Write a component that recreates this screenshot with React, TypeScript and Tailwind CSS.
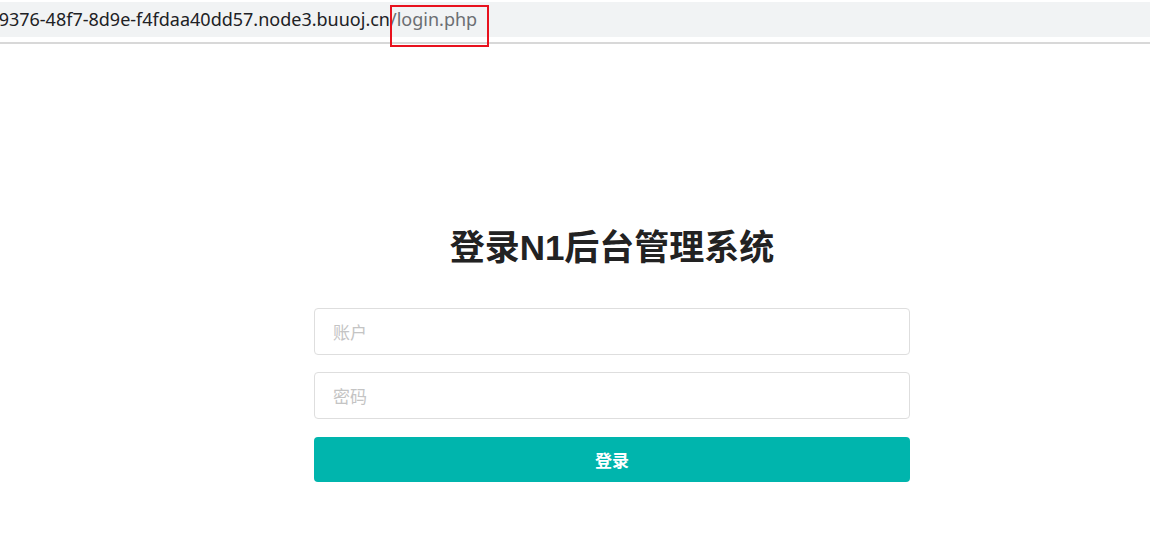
const App = () => {
    return (
        <div className="min-h-[539px] bg-white" style={{ fontFamily: '"Noto Sans", "Noto Sans CJK SC", sans-serif' }}>
            <header className="relative h-[44px]">
                <div className="mt-[2px] h-[35px] bg-[#f1f3f4] flex items-center text-[18px] whitespace-nowrap">
                    <div className="w-[390px] overflow-hidden flex justify-end">
                        <span className="text-[#202124]">http://3f1c2b8a-9376-48f7-8d9e-f4fdaa40dd57.node3.buuoj.cn</span>
                    </div>
                    <span className="text-[#6b6e72]">/login.php</span>
                </div>
                <div className="mt-[5px] h-[2px] bg-[#d8d8d8]"></div>
                <div className="absolute left-[390px] top-[3px] w-[99px] h-[42px] border-2 border-[#e8111d]"></div>
            </header>
            <main className="ml-[314px] w-[596px] pt-[181px]">
                <h1
                    className="text-center text-[35px] font-bold leading-[1.2] text-[#222222]"
                    style={{ fontFamily: '"Liberation Sans", "Noto Sans CJK SC", sans-serif' }}
                >
                    登录N1后台管理系统
                </h1>
                <form className="mt-[39px] flex flex-col" style={{ fontFamily: '"Noto Sans CJK SC", sans-serif' }}>
                    <input
                        type="text"
                        placeholder="账户"
                        className="h-[47px] w-full rounded-[4px] border border-[#dedede] px-[18px] text-[17px] outline-none placeholder:text-[#c4c4c4]"
                    />
                    <input
                        type="password"
                        placeholder="密码"
                        className="mt-[17px] h-[47px] w-full rounded-[4px] border border-[#dedede] px-[18px] text-[17px] outline-none placeholder:text-[#c4c4c4]"
                    />
                    <button type="button" className="mt-[18px] h-[45px] w-full rounded-[4px] bg-[#00b5ad] text-[17px] font-bold text-white">
                        登录
                    </button>
                </form>
            </main>
        </div>
    )
}

export default App
